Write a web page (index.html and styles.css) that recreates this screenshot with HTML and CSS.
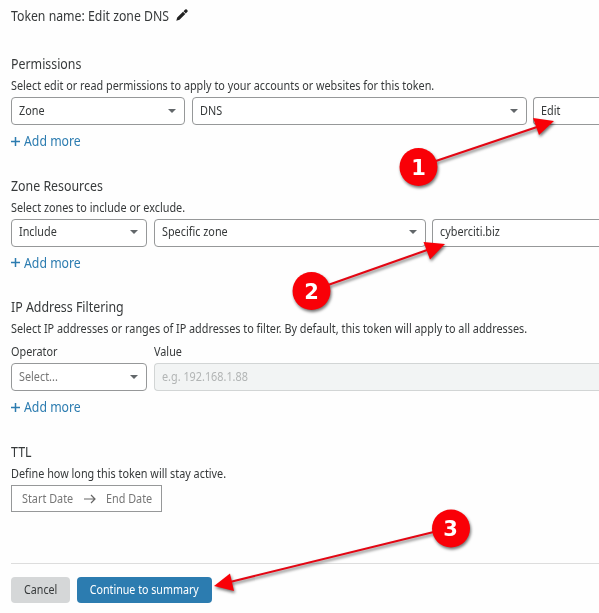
FILE: index.html
```html
<!DOCTYPE html>
<html lang="en">
<head>
<meta charset="utf-8">
<title>Create token</title>
<link rel="stylesheet" href="styles.css">
</head>
<body>
<main class="page">
  <div class="title"><span>Token name: Edit zone DNS</span>
    <svg class="pencil" width="12" height="12" viewBox="0 0 12 12"><path d="M0.3 11.7 1.2 8.5 7 2.7 9.3 5 3.5 10.8ZM7.500 2.200 9.2.6Q10-.1 10.8.6L11.4 1.2Q12.100 2 11.400 2.800L9.800 4.500Z" fill="#222"/></svg>
  </div>

  <section class="section permissions">
    <h2>Permissions</h2>
    <p class="desc">Select edit or read permissions to apply to your accounts or websites for this token.</p>
    <div class="row">
      <div class="select w-zone"><span>Zone</span><i class="caret"></i></div>
      <div class="select w-dns"><span>DNS</span><i class="caret"></i></div>
      <div class="select w-rest"><span>Edit</span></div>
    </div>
    <a class="add"><svg width="9" height="9" viewBox="0 0 9 9"><path d="M4.500 0V9M0 4.500H9"/></svg><span>Add more</span></a>
  </section>

  <section class="section resources">
    <h2>Zone Resources</h2>
    <p class="desc">Select zones to include or exclude.</p>
    <div class="row">
      <div class="select w-op"><span>Include</span><i class="caret"></i></div>
      <div class="select w-specific"><span>Specific zone</span><i class="caret"></i></div>
      <div class="select w-rest"><span>cyberciti.biz</span></div>
    </div>
    <a class="add"><svg width="9" height="9" viewBox="0 0 9 9"><path d="M4.500 0V9M0 4.500H9"/></svg><span>Add more</span></a>
  </section>

  <section class="section filtering">
    <h2>IP Address Filtering</h2>
    <p class="desc">Select IP addresses or ranges of IP addresses to filter. By default, this token will apply to all addresses.</p>
    <div class="row labels"><div class="w-op"><span>Operator</span></div><div><span>Value</span></div></div>
    <div class="row">
      <div class="select w-op muted"><span>Select...</span><i class="caret"></i></div>
      <div class="select w-rest disabled"><span>e.g. 192.168.1.88</span></div>
    </div>
    <a class="add"><svg width="9" height="9" viewBox="0 0 9 9"><path d="M4.500 0V9M0 4.500H9"/></svg><span>Add more</span></a>
  </section>

  <section class="section ttl">
    <h2>TTL</h2>
    <p class="desc">Define how long this token will stay active.</p>
    <div class="dates"><span class="start">Start Date</span>
      <svg width="12" height="10" viewBox="0 0 12 10"><path d="M0 5H11M7 1 11 5 7 9"/></svg>
      <span class="end">End Date</span></div>
  </section>

  <footer class="actions">
    <button class="btn cancel"><span>Cancel</span></button>
    <button class="btn primary"><span>Continue to summary</span></button>
  </footer>

  <svg class="notes" width="599" height="613" viewBox="0 0 599 613">
    <g class="note"><path class="line" d="M418 167 540 126"/><path d="M554 121 533 118 539 135Z"/><circle cx="418.500" cy="167" r="19"/><text x="418.500" y="174.500">1</text></g>
    <g class="note"><path class="line" d="M311 291 430 249"/><path d="M445 244 423.500 242 430 259.500Z"/><circle cx="311.500" cy="291" r="19"/><text x="311.500" y="298.500">2</text></g>
    <g class="note"><path class="line" d="M450 528 230 582"/><path d="M214 586 230 573.500 234 591Z"/><circle cx="451" cy="528.500" r="19"/><text x="450.500" y="536">3</text></g>
  </svg>
</main>
</body>
</html>
```
FILE: styles.css
```css
* { box-sizing: border-box; }
body { margin: 0; background: #fefefe; color: #36393a; font: 12px/20px "Noto Sans", sans-serif; overflow: hidden; }
.page { position: relative; width: 599px; height: 613px; padding: 6px 0 0 11px; overflow: hidden; white-space: nowrap; }
/* Slightly condensed text throughout */
span, h2, .desc { display: inline-block; transform: scaleX(.903); transform-origin: left center; }
.title { display: flex; align-items: center; gap: 6px; height: 20px; font-size: 13.600px; }
.title span { width: 159px; }
.pencil { margin-top: -2px; }
.section { display: flex; flex-direction: column; align-items: flex-start; }
.permissions { margin-top: 28px; }
.resources { margin-top: 18.500px; }
.filtering { margin-top: 18.500px; }
.ttl { margin-top: 19px; }
h2 { margin: 0; height: 22px; font-size: 13.600px; font-weight: 400; line-height: 20px; transform: scaleX(.91); }
.desc { margin: 0; height: 21px; font-size: 12px; line-height: 20px; }
.row { display: flex; gap: 6.500px; width: 588px; }
.labels { height: 23px; line-height: 24px; }
.select { display: flex; flex: none; align-items: center; justify-content: space-between; height: 28px; padding: 0 8px 1px 7px; border: 1px solid #969899; border-radius: 4px; background: #fff; }
.w-zone { width: 174px; }
.w-dns { width: 335px; }
.w-op { flex: none; width: 136px; }
.w-specific { width: 272px; }
.w-rest { flex: 1; border-right: 0; border-radius: 4px 0 0 4px; }
.caret { border: 4px solid transparent; border-top-color: #62676a; border-bottom: 0; }
.muted { color: #777; }
.disabled { color: #b2b5b5; background: #f2f4f4; border-color: #d2d5d5; }
.add { display: flex; align-items: center; gap: 4px; height: 32px; color: #2c7cb0; font-size: 13.600px; }
.add svg { fill: none; stroke: currentColor; stroke-width: 1.500; }
.dates { display: flex; align-items: center; gap: 10px; width: 151px; height: 27px; padding: 0 0 0 9.500px; border: 1px solid #969899; color: #777; background: #fff; }
.start { width: 52px; }
.end { width: 46px; }
.dates svg { fill: none; stroke: #666; stroke-width: 1.200; }
.actions { display: flex; gap: 7px; margin-top: 51px; padding-top: 13px; border-top: 1px solid #ddd; }
.btn { height: 26px; padding: 0; border: 0; border-radius: 4px; font: 12px/26px "Noto Sans", sans-serif; }
.btn span { transform: scaleX(.89); transform-origin: center; }
.cancel { width: 59px; color: #36393a; background: #d5d7d8; }
.primary { width: 135px; color: #fff; background: #2c7cb0; }
.notes { position: absolute; left: 0; top: 0; }
.note { fill: #f90007; filter: drop-shadow(1px 2px 1.500px rgba(0,0,0,.55)); }
.line { stroke: #e30613; stroke-width: 2; }
.note text { fill: #fff; font: bold 21px "DejaVu Sans", sans-serif; text-anchor: middle; }
```
